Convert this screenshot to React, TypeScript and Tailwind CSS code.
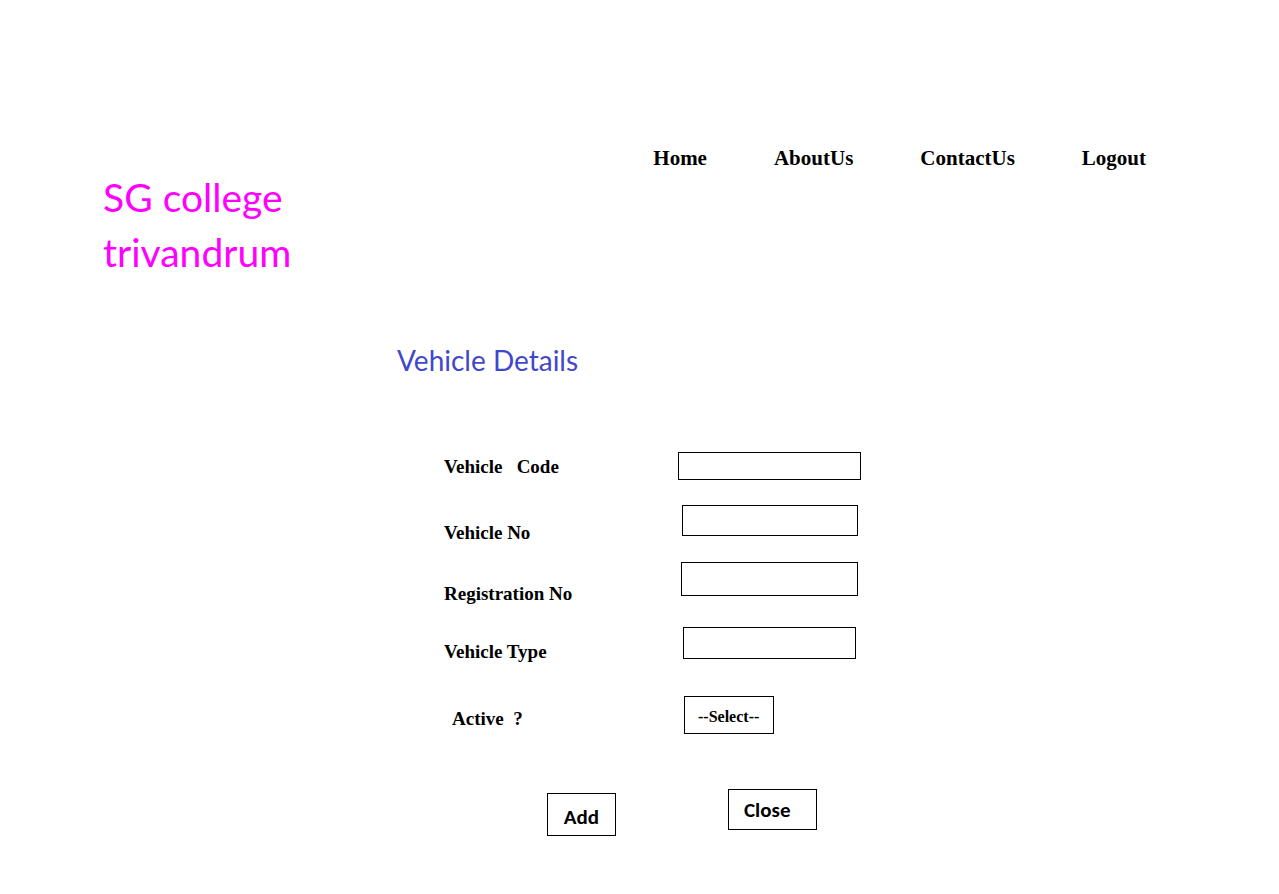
import type { ReactNode } from "react";

const navItems = ["Home", "AboutUs", "ContactUs", "Logout"];

const scriptFont = "font-['Tempus_Sans_ITC','Lato',sans-serif]";
const buttonFont = "font-['Calibri','Lato',sans-serif]";

type RowProps = {
  id: string;
  label: string;
  rowClass: string;
  labelClass: string;
  children: ReactNode;
};

function Row({ id, label, rowClass, labelClass, children }: RowProps) {
  return (
    <div className={`grid grid-cols-[234px_183px] items-start ${rowClass}`}>
      <label
        htmlFor={id}
        className={`whitespace-pre text-[19px] leading-6 font-bold ${labelClass}`}
      >
        {label}
      </label>
      {children}
    </div>
  );
}

const inputClass = "justify-self-center border border-black bg-white px-2 text-base";

export default function App() {
  return (
    <div className="min-h-screen bg-white pb-14 font-['Liberation_Serif','Times_New_Roman',serif] text-black">
      <header className="flex items-start justify-between pr-[133px] pl-[103px] pt-[146px]">
        <h1 className={`pt-6 text-[39px] leading-[55px] text-[#ff00ff] ${scriptFont}`}>
          SG college
          <br />
          trivandrum
        </h1>
        <nav>
          <ul className="flex gap-[67px] text-[21px] leading-6 font-bold">
            {navItems.map((item) => (
              <li key={item}>
                <a href="#">{item}</a>
              </li>
            ))}
          </ul>
        </nav>
      </header>

      <main className="pt-[62px] pl-[397px]">
        <h2 className={`text-[28px] leading-9 text-[#3f48cc] ${scriptFont}`}>
          Vehicle Details
        </h2>
        <form className="pt-[74px]" onSubmit={(e) => e.preventDefault()}>
          <div className="pl-[47px]">
            <Row id="code" label="Vehicle   Code" rowClass="" labelClass="pt-[3px]">
              <input id="code" type="text" className={`h-7 w-[183px] ${inputClass}`} />
            </Row>
            <Row id="number" label="Vehicle No" rowClass="mt-[25px]" labelClass="pt-4">
              <input id="number" type="text" className={`h-[31px] w-[176px] ${inputClass}`} />
            </Row>
            <Row id="registration" label="Registration No" rowClass="mt-[17px]" labelClass="pt-5">
              <input id="registration" type="text" className={`h-[34px] w-[177px] ${inputClass}`} />
            </Row>
            <Row id="type" label="Vehicle Type" rowClass="mt-[21px]" labelClass="pt-[13px]">
              <input id="type" type="text" className={`h-8 w-[173px] ${inputClass}`} />
            </Row>
            <Row id="active" label="Active  ?" rowClass="mt-8" labelClass="pt-[11px] pl-2">
              <select
                id="active"
                defaultValue=""
                className="ml-1.5 h-[38px] w-[90px] appearance-none border border-black bg-white pt-1 pl-[13px] text-base font-bold"
              >
                <option value="">--Select--</option>
                <option value="yes">Yes</option>
                <option value="no">No</option>
              </select>
            </Row>
          </div>
          <div
            className={`flex items-start gap-28 pt-[55px] pl-[150px] text-[21px] leading-6 font-bold ${buttonFont}`}
          >
            <button type="submit" className="mt-1 h-[43px] w-[69px] border border-black pt-1">
              Add
            </button>
            <button
              type="button"
              className="h-[41px] w-[89px] border border-black pl-[15px] text-left"
            >
              Close
            </button>
          </div>
        </form>
      </main>
    </div>
  );
}
